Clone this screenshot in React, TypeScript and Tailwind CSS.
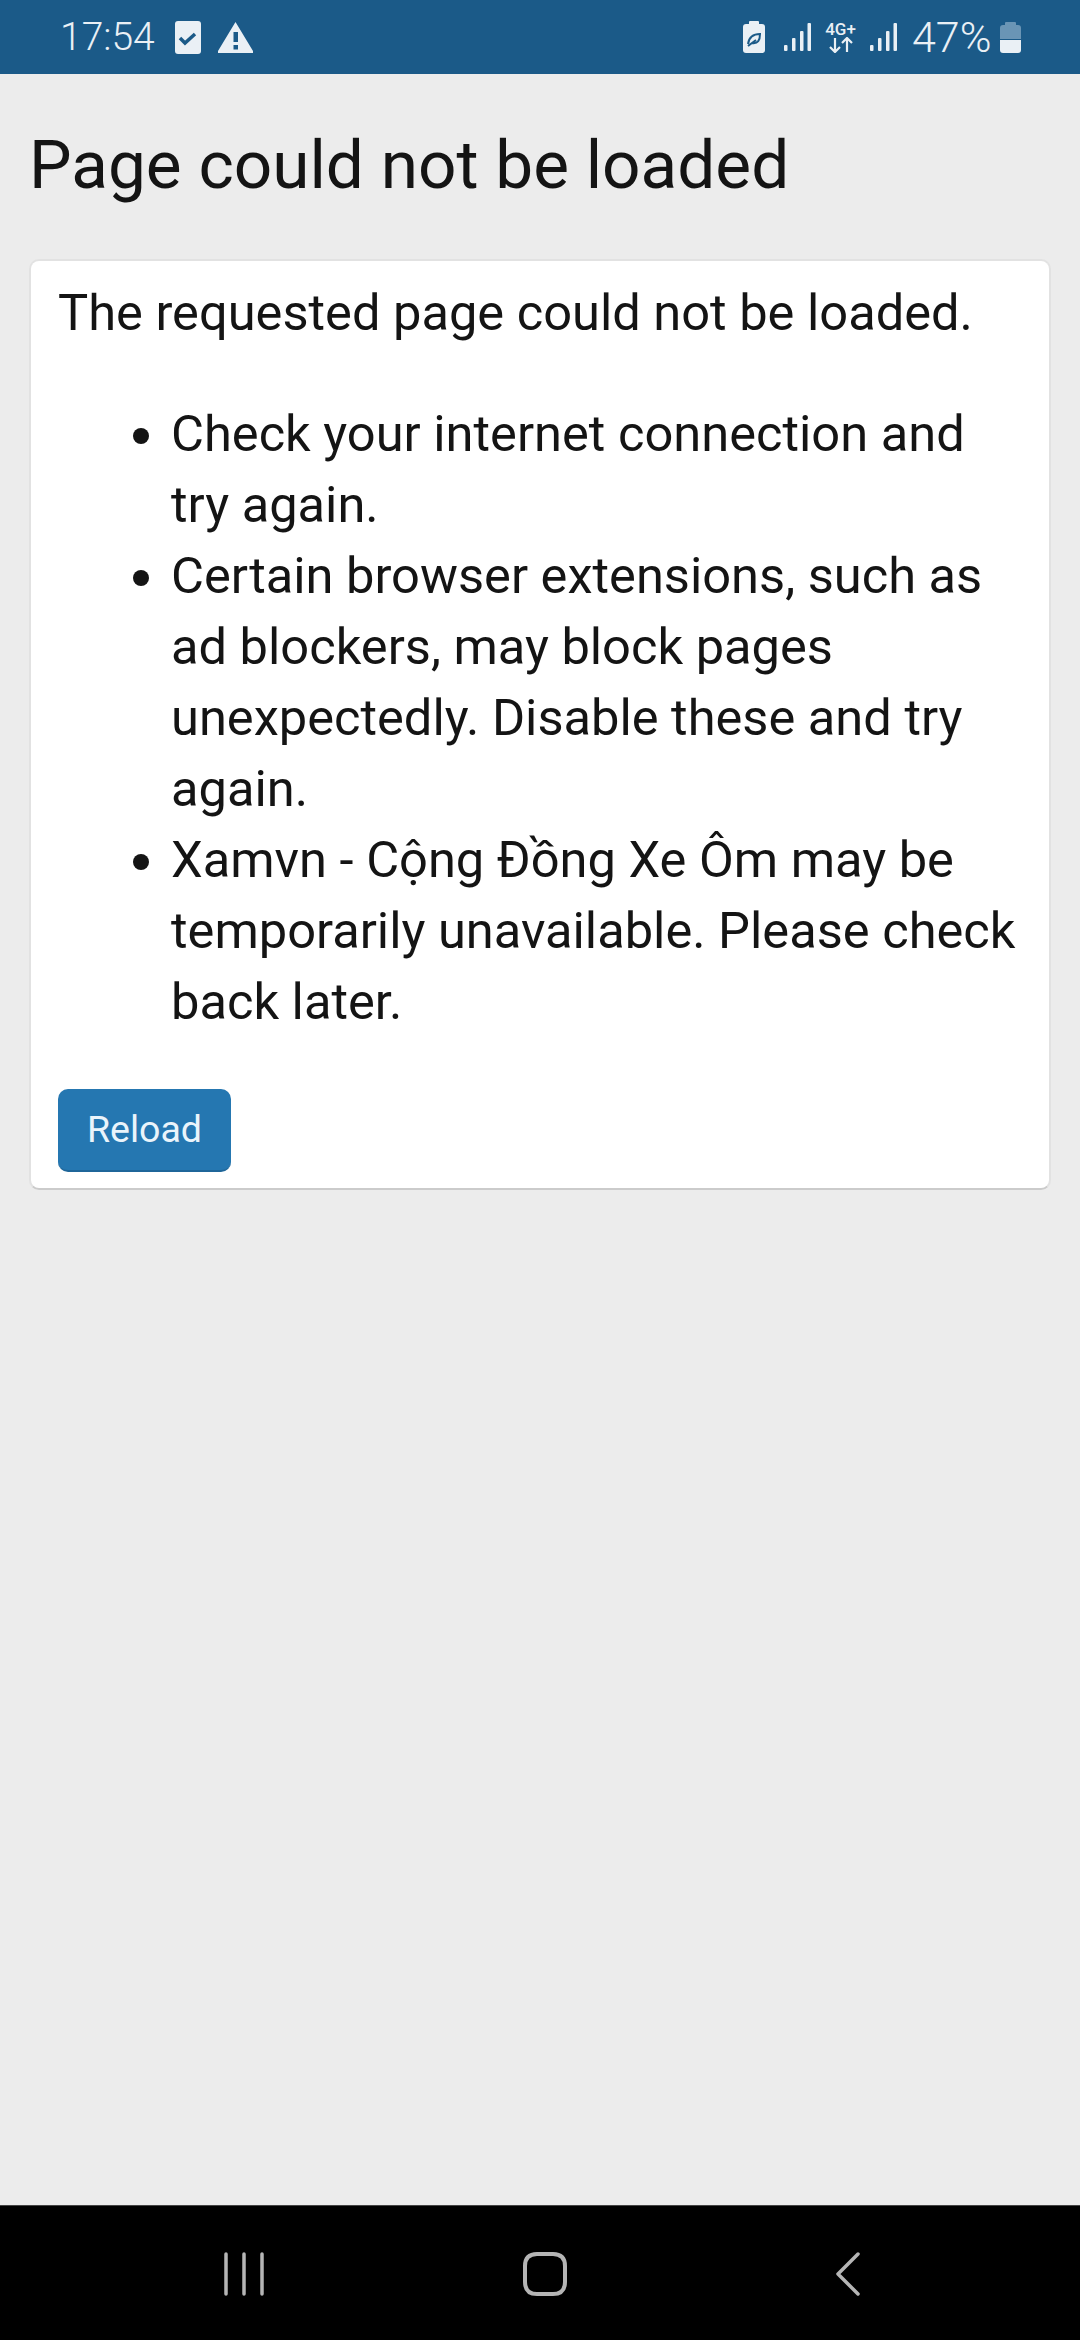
function SignalBars({ className }: { className: string }) {
  return (
    <svg className={className} width="27" height="28" viewBox="0 0 27 28" fill="#eaf0f5">
      <rect x="0" y="22" width="3.5" height="6" rx="1" />
      <rect x="8" y="15" width="3.5" height="13" rx="1" />
      <rect x="16" y="8" width="3.5" height="20" rx="1" />
      <rect x="23.5" y="0" width="3.5" height="28" rx="1" />
    </svg>
  );
}

function StatusBar() {
  return (
    <div className="h-[74px] shrink-0 bg-[#1b5a88] flex items-center justify-between pl-[60px] pr-[59px] text-[#eaf0f5]">
      <div className="flex items-center">
        <span className="text-[39px] leading-none font-light">17:54</span>
        <svg className="ml-[20px]" width="26" height="33" viewBox="0 0 26 33">
          <rect width="26" height="33" rx="3" fill="#eaf0f5" />
          <path d="M5 17l5 5 10-9" fill="none" stroke="#1b5a88" strokeWidth="3.5" />
        </svg>
        <svg className="ml-[17px]" width="35" height="31" viewBox="0 0 35 31">
          <path d="M17.5 0L35 29a1 1 0 0 1-1 2H1a1 1 0 0 1-1-2Z" fill="#eaf0f5" />
          <rect x="15.5" y="10" width="4.5" height="10" fill="#1b5a88" />
          <rect x="15.5" y="23" width="4.5" height="4.5" fill="#1b5a88" />
        </svg>
      </div>
      <div className="flex items-center">
        <svg width="22" height="32" viewBox="0 0 22 32">
          <rect x="6" y="0" width="10" height="4" rx="1" fill="#eaf0f5" />
          <rect x="0" y="3" width="22" height="29" rx="3" fill="#eaf0f5" />
          <path d="M5 23c1-7 5-10 12-10 0 6-2 10-8 9M5 25l8-6" fill="none" stroke="#1b5a88" strokeWidth="2" />
        </svg>
        <SignalBars className="ml-[19px]" />
        <div className="ml-[13px] w-[33px] flex flex-col items-center text-[17px] leading-[15px] font-medium">
          <span>4G+</span>
          <svg width="26" height="16" viewBox="0 0 26 16" fill="none" stroke="#eaf0f5" strokeWidth="2.2">
            <path d="M7 1v14M2 10l5 5 5-5M19 15V1M14 6l5-5 5 5" />
          </svg>
        </div>
        <SignalBars className="ml-[13px]" />
        <span className="ml-[15px] w-[80px] text-[43px] leading-none font-light">47%</span>
        <svg className="ml-[8px]" width="21" height="31" viewBox="0 0 21 31">
          <rect x="5" y="0" width="11" height="4" rx="1" fill="#6a95b5" />
          <path d="M3 3h15a3 3 0 0 1 3 3v11H0V6a3 3 0 0 1 3-3Z" fill="#6a95b5" />
          <path d="M0 18h21v10a3 3 0 0 1-3 3H3a3 3 0 0 1-3-3Z" fill="#eaf0f5" />
        </svg>
      </div>
    </div>
  );
}

function NavBar() {
  return (
    <div className="h-[135px] shrink-0 bg-black border-t border-[#444] flex items-start pt-[46px] pl-[224px]">
      <svg width="40" height="44" viewBox="0 0 40 44" stroke="#b5b5b5" strokeWidth="3.5" strokeLinecap="round">
        <path d="M2 2v40M20 2v40M38 2v40" />
      </svg>
      <svg className="ml-[259px]" width="44" height="44" viewBox="0 0 44 44" fill="none" stroke="#b5b5b5" strokeWidth="4">
        <path d="M14 2h16c8 0 12 4 12 12v16c0 8-4 12-12 12H14C6 42 2 38 2 30V14C2 6 6 2 14 2Z" />
      </svg>
      <svg className="ml-[269px]" width="24" height="44" viewBox="0 0 24 44" fill="none" stroke="#b5b5b5" strokeWidth="3.5" strokeLinecap="round" strokeLinejoin="round">
        <path d="M22 2L2 22l20 20" />
      </svg>
    </div>
  );
}

export default function App() {
  return (
    <div className="h-[2340px] flex flex-col bg-[#ececec] font-['Roboto',sans-serif] text-[#141414]">
      <StatusBar />
      <main className="flex-1 pl-[29px] pr-[29px]">
        <h1 className="mt-[44px] text-[67.5px] leading-[94px] font-normal">Page could not be loaded</h1>
        <div className="mt-[47px] bg-white border-2 border-[#e2e2e2] border-b-[#cbcbcb] rounded-[10px] px-[27px] pt-[16px] pb-[16px] text-[50.6px] leading-[71px]">
          <p>The requested page could not be loaded.</p>
          <ul className="mt-[50px] mb-[52px] pl-[113px] list-disc">
            <li>Check your internet connection and try again.</li>
            <li>Certain browser extensions, such as ad blockers, may block pages unexpectedly. Disable these and try again.</li>
            <li>Xamvn - Cộng Đồng Xe Ôm may be temporarily unavailable. Please check back later.</li>
          </ul>
          <button className="block w-[173px] h-[83px] rounded-[10px] bg-[#2577b1] border-b-2 border-b-[#1f6699] text-[#eaf4fb] text-[37.5px] leading-none">
            Reload
          </button>
        </div>
      </main>
      <NavBar />
    </div>
  );
}
